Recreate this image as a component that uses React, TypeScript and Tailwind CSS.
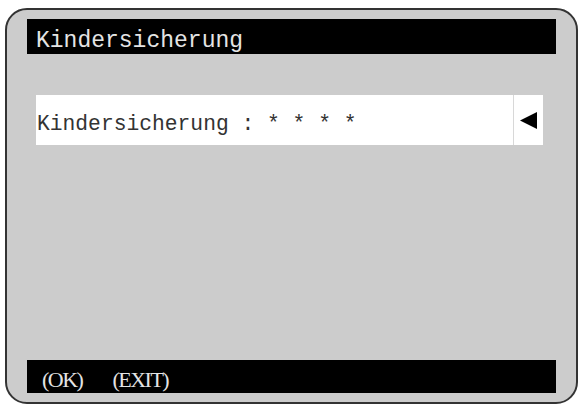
import React from 'react';

const mono = { fontFamily: '"Liberation Mono", "Courier New", monospace' };
const serif = { fontFamily: '"Liberation Serif", "Times New Roman", serif' };

export default function App() {
  return (
    <div className="w-[582px] h-[406px] bg-white pl-[5px] pt-[8px]" style={mono}>
      <div className="w-[573px] h-[396px] rounded-[22px] border-2 border-[#333333] bg-[#cccccc] px-[20px] pt-[9px] pb-[9px] flex flex-col">
        <div className="h-[35px] bg-black flex items-center pl-[9px] pt-[10px] text-[23px] leading-none text-[#e4e4e4]">
          Kindersicherung
        </div>

        <div className="mt-[41px] ml-[9px] mr-[13px] h-[50px] bg-white flex">
          <div className="flex-1 flex items-center pl-[1px] pt-[10px] text-[21.3px] leading-none text-[#333333] whitespace-pre">
            Kindersicherung : * * * *
          </div>
          <div className="w-[30px] border-l border-[#d8d8d8] flex items-center justify-center">
            <svg width="18" height="17" viewBox="0 0 18 17">
              <polygon points="0,8.5 17,0 17,17" fill="#000" />
            </svg>
          </div>
        </div>

        <div className="flex-1" />

        <div className="h-[33px] bg-black flex items-center pl-[15px] pt-[7px] text-[22px] leading-none text-[#e4e4e4] tracking-[-1.5px]" style={serif}>
          <span>(OK)</span>
          <span className="ml-[30px]">(EXIT)</span>
        </div>
      </div>
    </div>
  );
}
